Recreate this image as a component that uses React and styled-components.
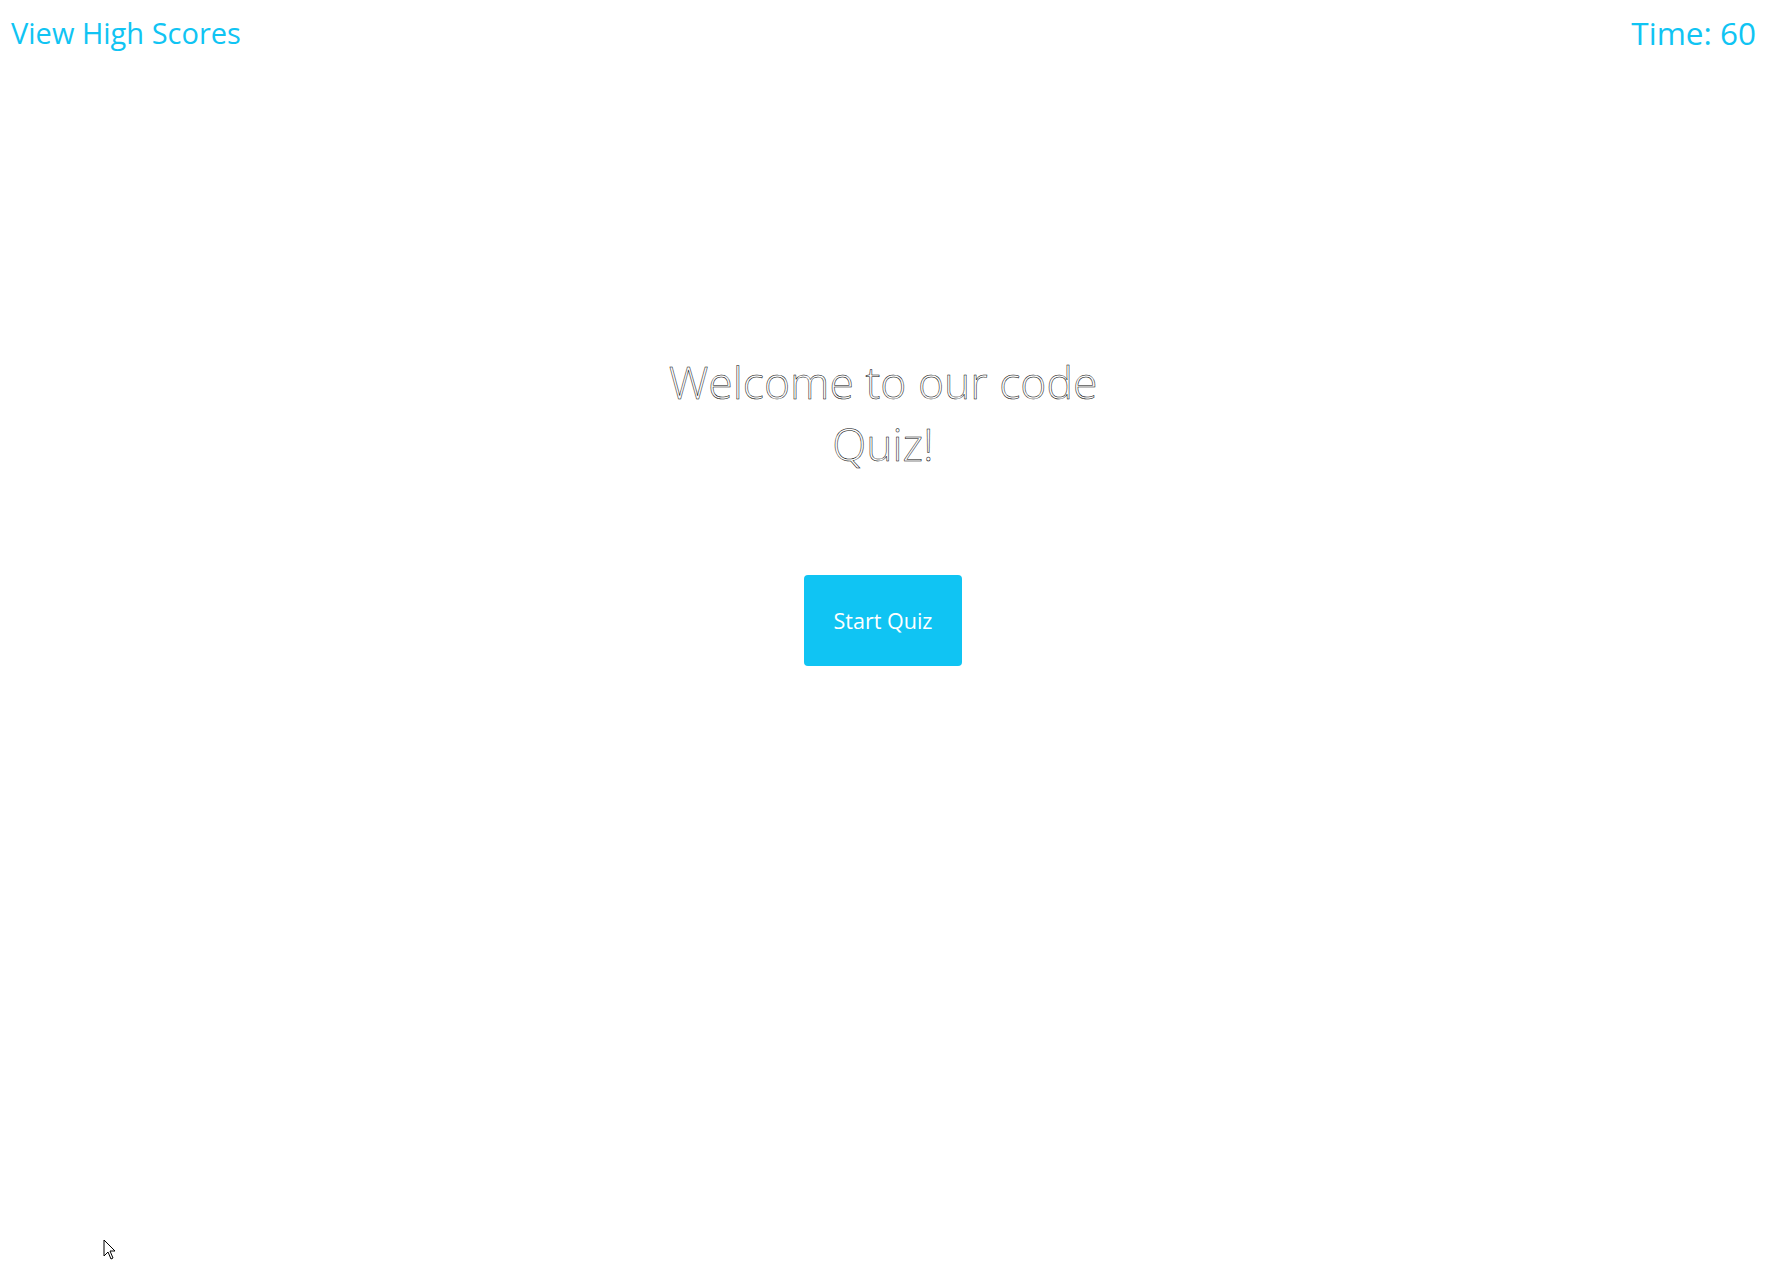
import React from "react";
import styled, { createGlobalStyle } from "styled-components";

const Global = createGlobalStyle`
  html, body { margin: 0; padding: 0; background: #fff; }
  body { font-family: "Open Sans", "Liberation Sans", sans-serif; }
`;

const Page = styled.div`
  position: relative;
  min-height: 1281px;
`;

const Header = styled.header`
  display: flex;
  justify-content: space-between;
  align-items: center;
  padding: 13px 10px 0 11px;
`;

const HeaderLink = styled.a`
  color: #10c4f3;
  font-size: 29px;
  font-weight: 400;
  text-decoration: none;
  line-height: 40px;
`;

const Timer = styled.div`
  color: #10c4f3;
  font-size: 31.5px;
  font-weight: 400;
  line-height: 40px;
`;

const Main = styled.main`
  display: flex;
  flex-direction: column;
  align-items: center;
  padding-top: 298px;
`;

const Title = styled.h1`
  width: 440px;
  margin: 0;
  text-align: center;
  font-size: 44.5px;
  font-weight: 300;
  line-height: 62px;
  color: #fff;
  -webkit-text-stroke: 0.5px #000;
`;

const StartButton = styled.button`
  margin-top: 100px;
  width: 158px;
  height: 91px;
  border: none;
  border-radius: 4px;
  background: #10c4f3;
  color: #fff;
  font-family: inherit;
  font-size: 21.5px;
  font-weight: 400;
  cursor: pointer;
`;

const Cursor = styled.svg`
  position: absolute;
  left: 103px;
  top: 1239px;
`;

export default function App() {
  return (
    <Page>
      <Global />
      <Header>
        <HeaderLink href="#">View High Scores</HeaderLink>
        <Timer>Time: 60</Timer>
      </Header>
      <Main>
        <Title>Welcome to our code Quiz!</Title>
        <StartButton>Start Quiz</StartButton>
      </Main>
      <Cursor width="14" height="22" viewBox="0 0 14 22">
        <path d="M1 1 L1 17 L5 13 L8 20 L10 19 L7 12 L12 12 Z" fill="#fff" stroke="#000" strokeWidth="1" />
      </Cursor>
    </Page>
  );
}
